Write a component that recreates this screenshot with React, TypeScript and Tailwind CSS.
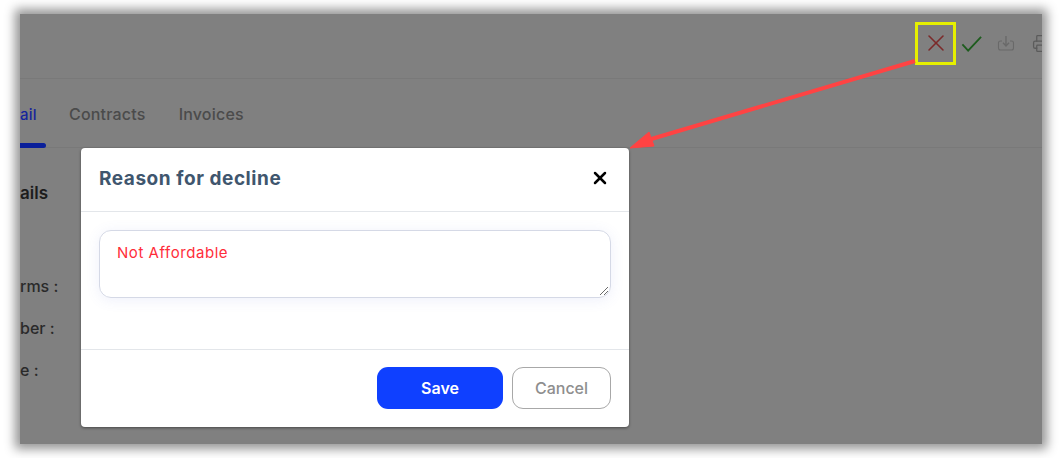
import { Printer, X } from "lucide-react";

const App = () => {
  return (
    <div className="w-[1062px] h-[458px] bg-white pt-[14px] pl-[20px] overflow-hidden font-['Inter',sans-serif]">
      <div className="relative w-[1022px] h-[430px] bg-[#808080] shadow-[0_0_10px_5px_rgba(0,0,0,0.42)]">
        <div className="w-full h-full overflow-hidden flex flex-col">
          {/* toolbar */}
          <div className="h-[65px] shrink-0 border-b border-[#797979] flex items-center justify-end">
            <div className="relative w-[41px] h-[43px] border-[3px] border-[#e6f000] flex items-center justify-center mr-[4px] -mt-[6px] shrink-0">
              <X className="w-[28px] h-[28px] text-[#7c2a2a]" strokeWidth={1.3} />
            </div>
            <svg viewBox="0 0 24 24" className="w-[23px] h-[23px] mr-[14px] -mt-[6px] shrink-0" fill="none" stroke="#1e5c1e" strokeWidth="1.9">
              <path d="M2.5 13 L8.5 19.5 L22 5" />
            </svg>
            <svg viewBox="0 0 18 18" className="w-[18px] h-[18px] mr-[17px] -mt-[6px] shrink-0" fill="none" stroke="#696969" strokeWidth="1.1">
              <path d="M5 7 H3.5 Q1.5 7 1.5 9 V14 Q1.5 16 3.5 16 H14.5 Q16.5 16 16.5 14 V9 Q16.5 7 14.5 7 H13" />
              <path d="M9 2 V11.5" strokeWidth="1.4" />
              <path d="M6 8.8 L9 12 L12 8.8" strokeWidth="1.4" />
            </svg>
            <Printer className="w-[19px] h-[19px] text-[#5b5b5b] -mr-[9px] -mt-[6px] shrink-0" strokeWidth={1.6} />
          </div>

          {/* tabs */}
          <div className="h-[69px] shrink-0 border-b border-[#797979] flex items-start text-[16px] font-medium text-[#4b4b4b] pt-[23px] tracking-[0.2px]">
            <div className="w-[26px] h-[46px] relative">
              <span className="text-[#16249c] text-[15px]">ail</span>
              <div className="absolute left-0 bottom-0 w-[26px] h-[5px] bg-[#0a1f9a] rounded-r-full" />
            </div>
            <span className="ml-[23px]">Contracts</span>
            <span className="ml-[33px]">Invoices</span>
          </div>

          {/* details behind the dialog */}
          <div className="flex flex-col text-[#1c1c1c]">
            <span className="text-[17px] font-semibold leading-[20px] mt-[35px]">ails</span>
            <div className="flex flex-col gap-[21px] text-[16px] font-medium text-[#2a2a2a] leading-[21px] mt-[73px]">
              <span>rms :</span>
              <span>ber :</span>
              <span>e :</span>
            </div>
          </div>
        </div>

        {/* arrow */}
        <svg className="absolute left-[600px] top-[38px] w-[310px] h-[105px] overflow-visible" viewBox="0 0 310 105" fill="none">
          <path d="M295 9 L28 88" stroke="#ff4343" strokeWidth="4" />
          <path d="M10 96 L29 80 L34 94 Z" fill="#ff4343" stroke="#ff4343" strokeWidth="1" />
        </svg>

        {/* dialog */}
        <div className="absolute left-[61px] top-[134px] w-[548px] h-[279px] bg-white rounded-[4px] shadow-[0_1px_3px_rgba(0,0,0,0.45)] flex flex-col">
          <div className="h-[64px] shrink-0 border-b border-[#e3e6ea] flex items-center justify-between pl-[18px] pr-[19px]">
            <span className="text-[19px] font-bold text-[#3f566e] tracking-[0.55px]">Reason for decline</span>
            <X className="w-[20px] h-[20px] text-black -mt-[3px]" strokeWidth={3} />
          </div>
          <div className="h-[138px] shrink-0 border-b border-[#e3e6ea] px-[18px] pt-[18px]">
            <div className="relative h-[68px] border border-[#d5d9e6] rounded-[12px] px-[17px] pt-[12px] text-[15px] leading-[20px] text-[#ff2d3a] tracking-[0.55px] shadow-[0_2px_14px_rgba(90,110,220,0.1)]">
              Not Affordable
              <svg viewBox="0 0 10 10" className="absolute right-[1px] bottom-[1px] w-[10px] h-[10px]" stroke="#6b6b6b" strokeWidth="1">
                <path d="M1 9 L9 1 M5 9 L9 5" />
              </svg>
            </div>
          </div>
          <div className="flex-1 flex items-start justify-end gap-[9px] pt-[17px] pr-[18px]">
            <button className="w-[126px] h-[42px] rounded-[11px] bg-[#0f40ff] text-white text-[16px] font-semibold">Save</button>
            <button className="w-[99px] h-[42px] rounded-[11px] border border-[#a8a8a8] bg-white text-[#8e8e8e] text-[16px] font-medium">Cancel</button>
          </div>
        </div>
      </div>
    </div>
  );
};

export default App;
